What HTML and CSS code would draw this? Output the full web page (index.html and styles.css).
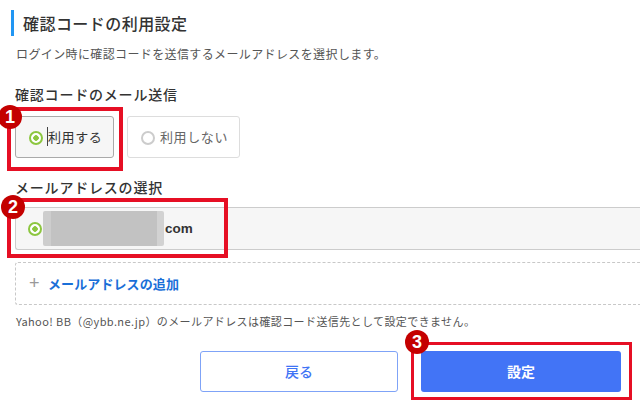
FILE: index.html
```html
<!DOCTYPE html>
<html lang="ja">
<head>
<meta charset="utf-8">
<title>確認コードの利用設定</title>
<link rel="stylesheet" href="styles.css">
</head>
<body>
<main class="page">
  <h1 class="title">確認コードの利用設定</h1>
  <p class="desc">ログイン時に確認コードを送信するメールアドレスを選択します。</p>
  <h2 class="label label-send">確認コードのメール送信</h2>
  <div class="choices">
    <div class="choice is-on"><span class="radio on"></span><span class="choice-text caret">利用する</span></div>
    <div class="choice"><span class="radio"></span><span class="choice-text muted">利用しない</span></div>
  </div>
  <h2 class="label label-mail">メールアドレスの選択</h2>
  <div class="mail-row"><span class="radio on"></span><span class="mask"></span><span class="mail-end">com</span></div>
  <div class="add-row"><span class="plus">+</span><a class="add-link">メールアドレスの追加</a></div>
  <p class="note">Yahoo! BB（@ybb.ne.jp）のメールアドレスは確認コード送信先として設定できません。</p>
  <div class="actions">
    <button class="btn btn-back">戻る</button>
    <button class="btn btn-set">設定</button>
  </div>
</main>
<div class="mark mark-1"></div><div class="mark mark-2"></div><div class="mark mark-3"></div>
<span class="badge badge-1">1</span><span class="badge badge-2">2</span><span class="badge badge-3">3</span>
</body>
</html>
```

FILE: styles.css
```css
* { box-sizing: border-box; }
html, body { margin: 0; height: 407px; overflow: hidden; background: #fff; }
body { position: relative; font-family: "Noto Sans CJK JP", "Noto Sans", sans-serif; color: #333; }
.page { padding: 10px 0 0 15px; }
.title { margin: 0 0 0 -4px; height: 26px; padding-left: 9px; border-left: 3px solid #2196f3; font-size: 16px; line-height: 26px; font-weight: 500; letter-spacing: .45px; }
.desc { margin: 9px 0 0 1px; font-size: 12px; line-height: 18px; letter-spacing: .38px; color: #555; }
.label { margin: 0; font-size: 14px; font-weight: 500; line-height: 20px; letter-spacing: .8px; }
.label-send { margin-top: 21px; }
.label-mail { margin-top: 19px; }
.choices { display: flex; gap: 13px; margin-top: 12px; }
.choice { display: flex; align-items: center; height: 42px; width: 113px; padding: 0 0 2px 13px; border: 1px solid #ddd; border-radius: 3px; font-size: 13px; }
.choice.is-on { width: 99px; background: #f6f6f6; border-color: #aaa; }
.choice .radio { margin-top: 3px; }
.choice-text { margin-left: 5px; letter-spacing: .6px; }
.caret { position: relative; }
.caret::before { content: ""; position: absolute; left: -1px; top: 0; bottom: 0; border-left: 1px solid #444; }
.muted { color: #666; }
.radio { flex: none; width: 14px; height: 14px; border: 2px solid #ccc; border-radius: 50%; background: #fff; }
.radio.on { border-color: #8cc63f; background: radial-gradient(circle, #8cc63f 0 2.5px, #fff 3px); }
.mail-row { display: flex; align-items: center; height: 43px; margin-top: 10px; padding-left: 12px; background: #f6f6f6; border: 1px solid #ccc; border-right: 0; border-radius: 3px 0 0 3px; }
.mask { width: 121px; height: 35px; margin-left: 1px; border-radius: 2px; background: linear-gradient(90deg, #cdcdcd 0 8px, #c2c2c2 8px 114px, #d2d2d2 114px); }
.mail-end { font-family: "Liberation Sans", sans-serif; font-size: 13.5px; font-weight: 700; margin-left: 1px; color: #333; }
.add-row { display: flex; align-items: center; height: 43px; margin-top: 12px; padding: 0 0 1px 13px; border: 1px dashed #c8c8c8; border-right: 0; border-radius: 3px 0 0 3px; }
.plus { font-family: "Liberation Sans", sans-serif; font-size: 18px; color: #999; width: 19px; padding-top: 1px; }
.add-link { font-size: 13px; font-weight: 700; letter-spacing: .1px; color: #1a6fd8; }
.note { margin: 8px 0 0 1px; font-size: 11px; line-height: 16px; color: #555; letter-spacing: .4px; }
.actions { display: flex; gap: 23px; margin: 22px 0 0 185px; }
.btn { width: 198px; height: 41px; border-radius: 3px; font-family: inherit; font-size: 14px; font-weight: 500; padding: 0 0 2px; }
.btn-back { background: #fff; border: 1px solid #7fa3f7; color: #3f74f5; }
.btn-set { width: 200px; background: #4274f6; border: 0; color: #fff; font-weight: 700; }
.mark { position: absolute; border: 4px solid #e60f24; }
.mark-1 { left: 7px; top: 107px; width: 116px; height: 64px; }
.mark-2 { left: 7px; top: 198px; width: 221px; height: 60px; }
.mark-3 { left: 411px; top: 342px; width: 221px; height: 58px; border-width: 3px; }
.badge { position: absolute; width: 24px; height: 24px; border-radius: 50%; background: #c40000; color: #fff; font-family: "Liberation Sans", sans-serif; font-size: 18px; font-weight: 700; line-height: 24px; text-align: center; }
.badge-1 { left: -2px; top: 105px; }
.badge-2 { left: 1px; top: 195px; }
.badge-3 { left: 405px; top: 330px; }
```
